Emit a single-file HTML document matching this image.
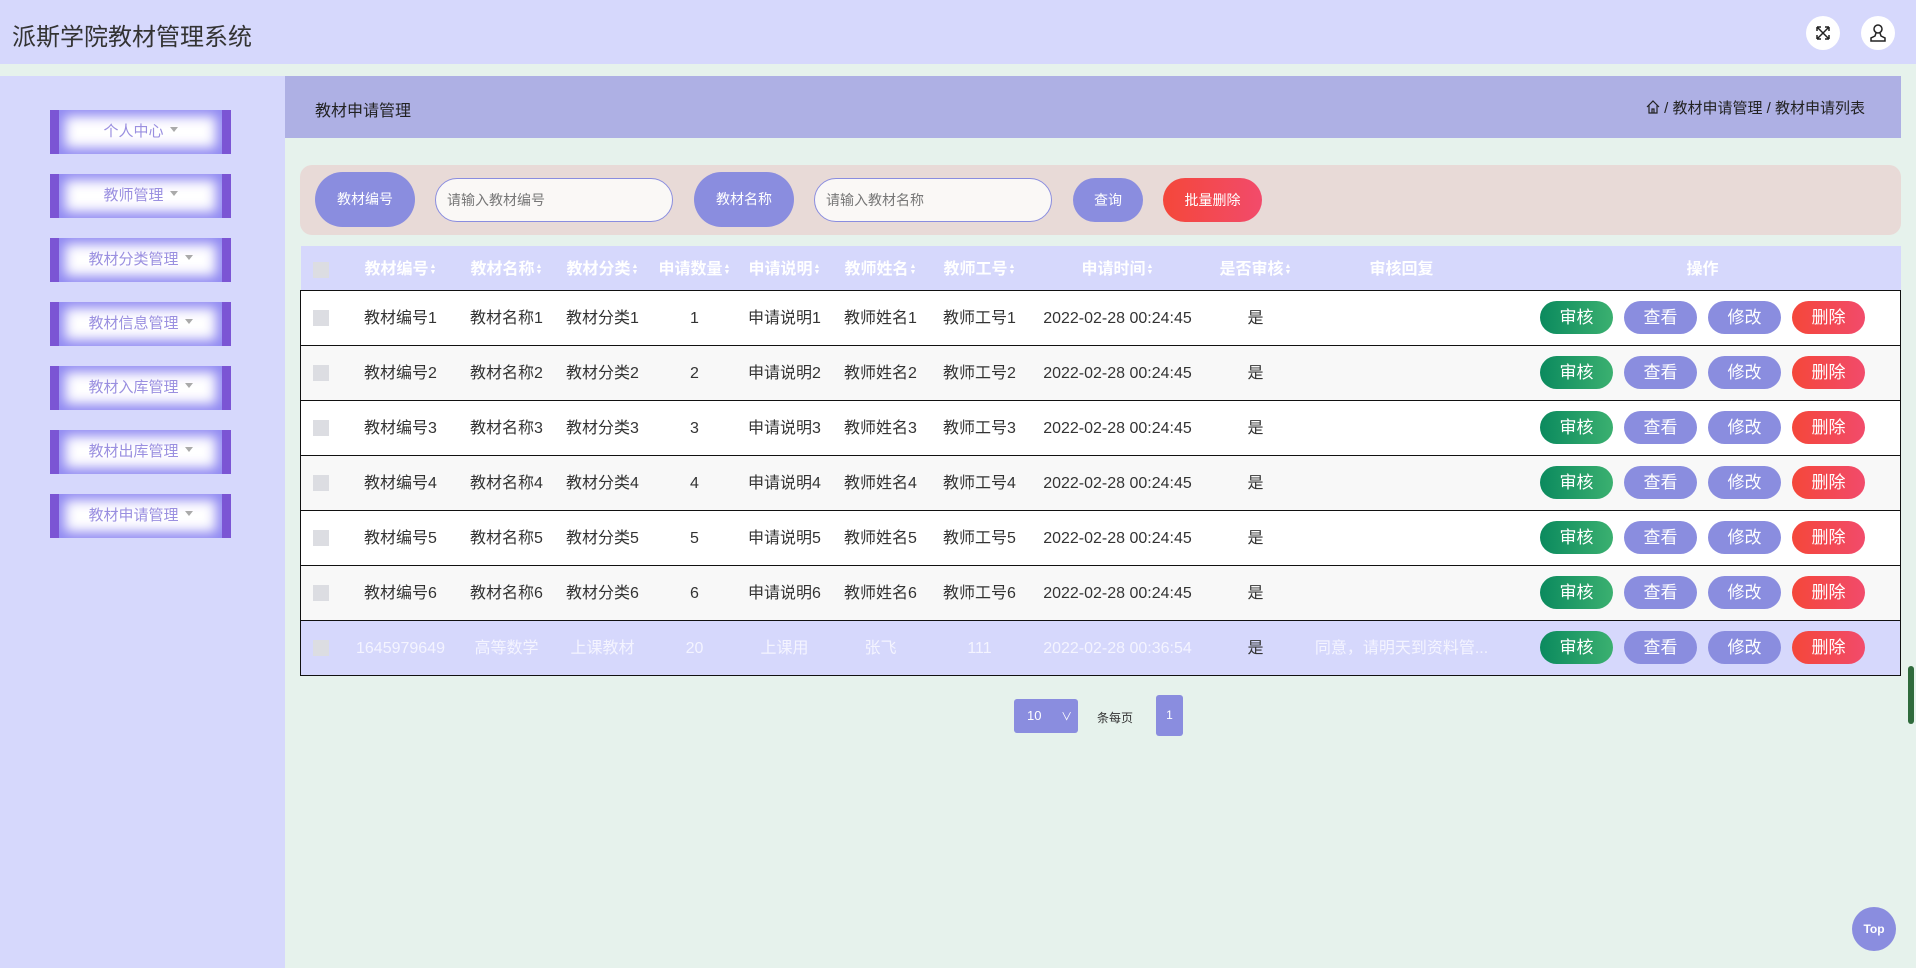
<!DOCTYPE html>
<html><head><meta charset="utf-8"><style>
*{margin:0;padding:0;box-sizing:border-box}
body{width:1916px;height:968px;overflow:hidden;background:#e6f2ec;font-family:"Liberation Sans","Noto Sans CJK SC",sans-serif;position:relative}
.abs{position:absolute}
.hdr{left:0;top:0;width:1916px;height:64px;background:#d6d8fc}
.title{left:12px;top:17px;font-size:24px;color:#333}
.ic{width:34px;height:34px;border-radius:50%;background:#fff;top:16px}
.side{left:0;top:76px;width:285px;height:892px;background:#d6d8fc}
.mi{left:50px;width:181px;height:44px;background:#fff;border-left:9px solid #7b55d4;border-right:9px solid #7b55d4;box-shadow:inset 0 0 12px 6px #8f88f2;text-align:center;line-height:44px;font-size:15px;color:#9a8fe0}
.mi:after{content:"";display:inline-block;margin-left:6px;border:4px solid transparent;border-top:5px solid #aaa;vertical-align:0px}
.bc{left:285px;top:76px;width:1616px;height:62px;background:#aeb0e4}
.sb{left:300px;top:165px;width:1601px;height:70px;background:#e8dad7;border-radius:12px}
.pill{height:55px;top:172px;border-radius:28px;background:#8a8ddf;color:#fff;font-size:14px;text-align:center;line-height:55px}
.inp{top:178px;height:44px;border:1px solid #8a8ddf;border-radius:22px;background:#faf8f6;font-size:14px;color:#777;line-height:42px;padding-left:11px}
.btn{top:178px;height:44px;border-radius:22px;color:#fff;font-size:14px;text-align:center;line-height:44px}
table{position:absolute;left:300px;top:246px;width:1601px;border-collapse:collapse;font-size:16px;color:#333;table-layout:fixed}
th{height:44px;background:#d6d8fc;color:#fff;font-weight:bold;font-size:16px;white-space:nowrap;vertical-align:middle;line-height:20px;padding-top:4px}
td{height:55px;text-align:center;border-top:1.5px solid #111;white-space:nowrap;overflow:hidden;text-overflow:ellipsis;vertical-align:middle;line-height:20px;padding-top:2px}
tr.r td:first-child{border-left:1.5px solid #111}
tr.r td:last-child{border-right:1.5px solid #111}
tr:nth-child(even) td{background:#fff}
tr:nth-child(odd).r td{background:#f8f8f8}
tr.last td{background:#d6d8fc!important;color:#f4f4ff;border-bottom:1.5px solid #111}
.cb{display:inline-block;width:16px;height:16px;background:#dcdde2;vertical-align:middle}
.s{display:inline-block;font-size:7px;line-height:6px;color:#fff;vertical-align:middle;margin-left:1px}
.ab{display:inline-block;width:73px;height:33px;border-radius:17px;color:#fff;line-height:33px;font-size:17px;margin:0 5.5px;vertical-align:middle;text-align:center}
.g{background:linear-gradient(90deg,#0b8a5e,#3bb070)}.p{background:#8a8ddf}.rd{background:linear-gradient(90deg,#f4473a,#f24b6b)}
td.op{text-align:left;padding-left:38px;overflow:visible;padding-top:0}
</style></head><body>
<div class="abs hdr"></div>
<div class="abs title">派斯学院教材管理系统</div>
<div class="abs ic" style="left:1806px"><svg width="34" height="34" viewBox="0 0 34 34" fill="none" stroke="#222" stroke-width="1.5"><path d="M11 11l12 12M23 11l-12 12M11 11h4M11 11v4M23 11h-4M23 11v4M11 23h4M11 23v-4M23 23h-4M23 23v-4"/></svg></div>
<div class="abs ic" style="left:1861px"><svg width="34" height="34" viewBox="0 0 34 34" fill="none" stroke="#222" stroke-width="1.5"><circle cx="17" cy="13" r="4"/><path d="M15 17l-1 3-4 2v3h14v-3l-4-2-1-3"/></svg></div>
<div class="abs side"></div>
<div class="abs mi" style="top:110px">个人中心</div>
<div class="abs mi" style="top:174px">教师管理</div>
<div class="abs mi" style="top:238px">教材分类管理</div>
<div class="abs mi" style="top:302px">教材信息管理</div>
<div class="abs mi" style="top:366px">教材入库管理</div>
<div class="abs mi" style="top:430px">教材出库管理</div>
<div class="abs mi" style="top:494px">教材申请管理</div>
<div class="abs bc"></div>
<div class="abs" style="left:315px;top:97px;font-size:16px;color:#222">教材申请管理</div>
<div class="abs" style="left:1646px;top:97px;font-size:15px;color:#222"><svg width="14" height="14" viewBox="0 0 14 14" fill="none" stroke="#222" stroke-width="1.2" style="vertical-align:-1px"><path d="M1 7L7 1l6 6M3 5.5V13h8V5.5M6 13V9h2v4"/></svg> / 教材申请管理 / 教材申请列表</div>
<div class="abs sb"></div>
<div class="abs pill" style="left:315px;width:100px">教材编号</div>
<div class="abs inp" style="left:435px;width:238px">请输入教材编号</div>
<div class="abs pill" style="left:694px;width:100px">教材名称</div>
<div class="abs inp" style="left:814px;width:238px">请输入教材名称</div>
<div class="abs btn" style="left:1073px;width:70px;background:#8a8ddf">查询</div>
<div class="abs btn" style="left:1163px;width:99px;background:linear-gradient(90deg,#f4473a,#f24b6b)">批量删除</div>
<table>
<colgroup><col style="width:40px"><col style="width:120px"><col style="width:92px"><col style="width:100px"><col style="width:84px"><col style="width:96px"><col style="width:96px"><col style="width:102px"><col style="width:174px"><col style="width:102px"><col style="width:190px"><col></colgroup>
<tr><th><span class="cb"></span></th><th>教材编号<span class="s">▲<br>▼</span></th><th>教材名称<span class="s">▲<br>▼</span></th><th>教材分类<span class="s">▲<br>▼</span></th><th>申请数量<span class="s">▲<br>▼</span></th><th>申请说明<span class="s">▲<br>▼</span></th><th>教师姓名<span class="s">▲<br>▼</span></th><th>教师工号<span class="s">▲<br>▼</span></th><th>申请时间<span class="s">▲<br>▼</span></th><th>是否审核<span class="s">▲<br>▼</span></th><th>审核回复</th><th style="padding-left:8px">操作</th></tr>
<tr class="r"><td><span class="cb"></span></td><td>教材编号1</td><td>教材名称1</td><td>教材分类1</td><td>1</td><td>申请说明1</td><td>教师姓名1</td><td>教师工号1</td><td>2022-02-28 00:24:45</td><td>是</td><td></td><td class="op"><span class="ab g">审核</span><span class="ab p">查看</span><span class="ab p">修改</span><span class="ab rd">删除</span></td></tr>
<tr class="r"><td><span class="cb"></span></td><td>教材编号2</td><td>教材名称2</td><td>教材分类2</td><td>2</td><td>申请说明2</td><td>教师姓名2</td><td>教师工号2</td><td>2022-02-28 00:24:45</td><td>是</td><td></td><td class="op"><span class="ab g">审核</span><span class="ab p">查看</span><span class="ab p">修改</span><span class="ab rd">删除</span></td></tr>
<tr class="r"><td><span class="cb"></span></td><td>教材编号3</td><td>教材名称3</td><td>教材分类3</td><td>3</td><td>申请说明3</td><td>教师姓名3</td><td>教师工号3</td><td>2022-02-28 00:24:45</td><td>是</td><td></td><td class="op"><span class="ab g">审核</span><span class="ab p">查看</span><span class="ab p">修改</span><span class="ab rd">删除</span></td></tr>
<tr class="r"><td><span class="cb"></span></td><td>教材编号4</td><td>教材名称4</td><td>教材分类4</td><td>4</td><td>申请说明4</td><td>教师姓名4</td><td>教师工号4</td><td>2022-02-28 00:24:45</td><td>是</td><td></td><td class="op"><span class="ab g">审核</span><span class="ab p">查看</span><span class="ab p">修改</span><span class="ab rd">删除</span></td></tr>
<tr class="r"><td><span class="cb"></span></td><td>教材编号5</td><td>教材名称5</td><td>教材分类5</td><td>5</td><td>申请说明5</td><td>教师姓名5</td><td>教师工号5</td><td>2022-02-28 00:24:45</td><td>是</td><td></td><td class="op"><span class="ab g">审核</span><span class="ab p">查看</span><span class="ab p">修改</span><span class="ab rd">删除</span></td></tr>
<tr class="r"><td><span class="cb"></span></td><td>教材编号6</td><td>教材名称6</td><td>教材分类6</td><td>6</td><td>申请说明6</td><td>教师姓名6</td><td>教师工号6</td><td>2022-02-28 00:24:45</td><td>是</td><td></td><td class="op"><span class="ab g">审核</span><span class="ab p">查看</span><span class="ab p">修改</span><span class="ab rd">删除</span></td></tr>
<tr class="r last"><td><span class="cb"></span></td><td>1645979649</td><td>高等数学</td><td>上课教材</td><td>20</td><td>上课用</td><td>张飞</td><td>111</td><td>2022-02-28 00:36:54</td><td style="color:#333">是</td><td>同意，请明天到资料管...</td><td class="op"><span class="ab g">审核</span><span class="ab p">查看</span><span class="ab p">修改</span><span class="ab rd">删除</span></td></tr>
</table>
<div class="abs" style="left:1014px;top:699px;width:64px;height:34px;background:#8a8ddf;border-radius:3px;color:#fff;font-size:13px;line-height:34px;padding-left:13px">10 <span style="margin-left:16px;font-size:11px">∨</span></div>
<div class="abs" style="left:1097px;top:709px;font-size:12px;color:#333">条每页</div>
<div class="abs" style="left:1156px;top:695px;width:27px;height:41px;background:#8a8ddf;border-radius:3px;color:#fff;font-size:12px;line-height:41px;text-align:center">1</div>
<div class="abs" style="left:1852px;top:907px;width:44px;height:44px;border-radius:50%;background:#8a8ddf;color:#fff;font-size:12px;font-weight:bold;text-align:center;line-height:44px">Top</div>
<div class="abs" style="left:1908px;top:666px;width:6px;height:58px;background:#2f6b3c;border-radius:3px"></div>
</body></html>
